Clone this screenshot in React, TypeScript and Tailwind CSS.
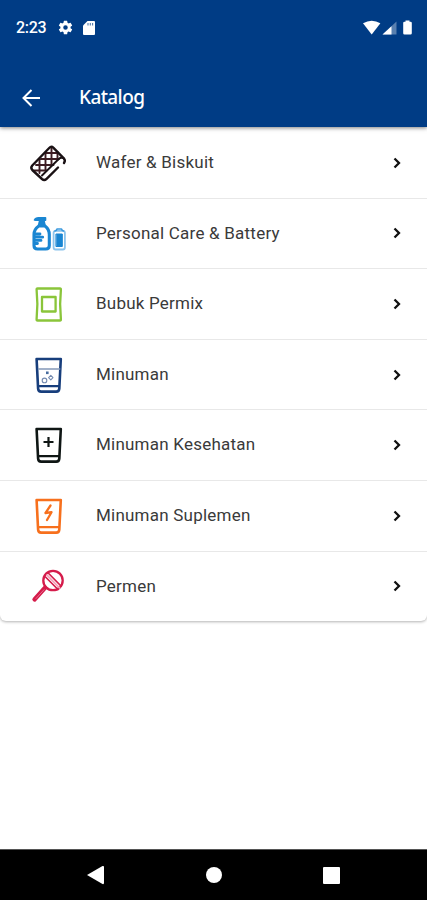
import type { ReactNode } from 'react'

interface Category {
  label: string
  icon: ReactNode
}

function Icon({ children, color }: { children: ReactNode; color: string }) {
  return (
    <svg viewBox="0 0 40 40" className="size-10" fill="none" stroke={color} strokeWidth="2.6" strokeLinecap="round" strokeLinejoin="round">
      {children}
    </svg>
  )
}

function Glass() {
  return (
    <>
      <path d="M8.6 4h24.2l-1.5 29.6q-.2 3-3 3H13.1q-2.8 0-3-3L8.6 4z" />
      <path d="M10.5 31.2h20.4" strokeWidth="2.2" />
    </>
  )
}

const CATEGORIES: Category[] = [
  {
    label: 'Wafer & Biskuit',
    icon: (
      <Icon color="#1a1114">
        <path d="M11.5 16.500V30M17.500 10v17.500M23.500 5v17M29.500 9v8M18 10h12M13 16h18M8 22h17.500M6 27.500h12.500" stroke="#3c1c22" strokeWidth="1.900" />
        <path d="M36 20q1.800-2.700-.2-4.700L25.500 4.800q-2.200-2-4.300.2L4.300 22.500q-2 2.300 0 4.500l9.700 9q2.300 2 4.600-.2L30 24.500" strokeWidth="2.400" />
        <path d="M35.500 15.200q-2.500-1.300-4.500.6L14 32.500" strokeWidth="1.900" />
      </Icon>
    ),
  },
  {
    label: 'Personal Care & Battery',
    icon: (
      <Icon color="#1a86d2">
        <path d="M6.500 7q1-2.200 4-2.200h7v2.400h-1.700l1.200 5h-6.400l1.200-5H8z" fill="#1a86d2" strokeWidth="1.6" />
        <path d="M10.8 13h6.200q4.300 3.300 4.300 8.500v11q0 3.500-3.500 3.500H9.500q-3.500 0-3.500-3.500v-11q0-5.200 4.800-8.500z" strokeWidth="3.1" />
        <path d="M6.500 21H12M6.500 24.200h8.200M6.500 27.400h6.500M6.500 30.500h3" strokeWidth="2.8" />
        <rect x="25.6" y="17.8" width="11.3" height="18.7" rx="2" stroke="#8cc4ec" strokeWidth="1.8" />
        <path d="M27 18q1.500-.3 2-2h4.500q.5 1.700 2 2" stroke="#3c9ade" strokeWidth="1.6" />
        <path d="M28.300 21h6v12.500h-6z" fill="#1a86d2" strokeWidth="1" />
      </Icon>
    ),
  },
  {
    label: 'Bubuk Permix',
    icon: (
      <Icon color="#8ac53a">
        <path d="M9.500 4.500h22.500q1 0 .9 1.200-1.600 14.800 0 29.600.1 1.200-.9 1.200H9.500q-1 0-.9-1.200 1.600-14.800 0-29.600-.1-1.200.9-1.200z" strokeWidth="2.3" />
        <rect x="14" y="13" width="13.6" height="14.5" strokeWidth="2.3" />
      </Icon>
    ),
  },
  {
    label: 'Minuman',
    icon: (
      <Icon color="#173e7c">
        <Glass />
        <path d="M10.5 14h21.300" stroke="#8498b8" strokeWidth="1.3" />
        <rect x="18" y="16.5" width="2.600" height="2.600" fill="#466b9e" stroke="none" />
        <g stroke="#758bb0" strokeWidth="1.1">
          <path d="m22.800 20.400 2.200 2.200-2.200 2.200-2.200-2.200z" />
          <circle cx="16.500" cy="25.400" r="2.300" />
        </g>
      </Icon>
    ),
  },
  {
    label: 'Minuman Kesehatan',
    icon: (
      <Icon color="#0f1614">
        <Glass />
        <path d="M20.500 12v10M15.500 17h10" strokeWidth="2.2" strokeLinecap="butt" />
      </Icon>
    ),
  },
  {
    label: 'Minuman Suplemen',
    icon: (
      <Icon color="#f7701d">
        <Glass />
        <path d="m22.500 9.500-5 7.500 6-.8L19 24" strokeWidth="2.3" />
      </Icon>
    ),
  },
  {
    label: 'Permen',
    icon: (
      <Icon color="#d51c4b">
        <circle cx="25" cy="14.500" r="9.700" strokeWidth="2.300" />
        <path d="m20.700 7.500 12.300 12.500M17.500 11l12.500 12.500" strokeWidth="1.700" />
        <path d="m19 9.200 12.500 12.600" stroke="#f3a5ba" strokeWidth="1.700" />
        <path d="M17 21.800 6.500 33.500" strokeWidth="4.300" />
        <path d="M16 23.700 8 32.500" stroke="#ec829f" strokeWidth=".8" />
      </Icon>
    ),
  },
]

function StatusBar() {
  return (
    <div className="flex h-[54px] items-center pl-4 pr-[14px] pt-px text-white">
      <span className="w-[41px] text-base font-medium tracking-[-0.3px]">2:23</span>
      <svg viewBox="0 0 24 24" className="size-[17px]" fill="currentColor">
        <path d="M19.140 12.940c.04-.3.060-.61.060-.94s-.02-.64-.07-.94l2.030-1.580a.5.5 0 0 0 .12-.61l-1.920-3.320a.49.490 0 0 0-.59-.22l-2.390.96a7 7 0 0 0-1.620-.94l-.36-2.540a.48.480 0 0 0-.48-.41h-3.840a.48.480 0 0 0-.47.410l-.36 2.540a7 7 0 0 0-1.620.94l-2.390-.96a.48.480 0 0 0-.59.220L2.740 8.870a.48.480 0 0 0 .12.610l2.030 1.580a7 7 0 0 0 0 1.880l-2.030 1.580a.49.490 0 0 0-.12.610l1.920 3.320c.12.220.37.290.59.220l2.390-.96c.5.380 1.030.7 1.620.94l.36 2.540c.05.240.24.410.48.410h3.840c.24 0 .44-.17.470-.41l.36-2.540a7 7 0 0 0 1.620-.94l2.390.96c.22.080.47 0 .59-.22l1.920-3.320a.48.480 0 0 0-.12-.61zM12 15.200a3.200 3.200 0 1 1 0-6.400 3.200 3.200 0 0 1 0 6.400z" />
      </svg>
      <svg viewBox="0 0 12 14" className="ml-[9px] h-[14px] w-3" fill="currentColor">
        <path d="M4.500 0H11q1 0 1 1v12q0 1-1 1H1q-1 0-1-1V4.500z" />
        <path d="M5 2v2.500M7.300 2v2.500M9.600 2v2.500" stroke="#527bab" strokeWidth="1.1" />
      </svg>
      <svg viewBox="0 0 50 16" className="ml-auto h-4 w-[50px]" fill="currentColor">
        <path d="M0 3.200Q8.700-1.800 17.400 3.200L8.700 14.500z" />
        <path d="M33.500 1.500v13H19.500z" opacity=".35" />
        <path d="M28.500 6.200v8.300h-9z" />
        <path d="M42.500.5h4v1.200h1q1.300 0 1.300 1.300v10.200q0 1.300-1.300 1.300h-6q-1.300 0-1.300-1.300V3q0-1.300 1.300-1.300h1z" />
      </svg>
    </div>
  )
}

function NavBar() {
  return (
    <nav className="flex h-[51px] items-center justify-between border-t border-[#555] bg-black px-[87px]">
      <svg viewBox="0 0 17 20" className="h-5 w-[17px]" fill="white">
        <path d="M0 10 15.500 1q1.500-.5 1.500 1v16q0 1.500-1.500 1z" />
      </svg>
      <span className="size-4 rounded-full bg-white" />
      <span className="size-[17px] rounded-[1px] bg-white" />
    </nav>
  )
}

export default function App() {
  return (
    <div className="flex h-[900px] w-full flex-col overflow-hidden bg-white font-['Roboto',sans-serif]">
      <header className="relative h-[127px] shrink-0 bg-[#003c85] shadow-[0_1px_4px_rgba(0,0,0,0.5)]">
        <StatusBar />
        <div className="flex h-[73px] items-center pl-[22px] pt-[13px] text-white">
          <svg viewBox="0 0 18 18" className="mt-px size-[18px]" fill="none" stroke="currentColor" strokeWidth="2">
            <path d="M18 9H2M9.500 1 1.500 9l8 8" />
          </svg>
          <h1 className="ml-[39px] font-['Noto_Sans',sans-serif] text-[19px] font-medium tracking-[-0.6px]">Katalog</h1>
        </div>
      </header>

      <main className="flex-1">
        <ul className="rounded-b-md pt-px shadow-[0_1px_3px_rgba(0,0,0,0.3)]">
          {CATEGORIES.map(({ label, icon }) => (
            <li key={label} className="flex h-[70.6px] items-center border-b border-[#e8e8e8] pl-7 pr-[25px] last:h-[69.6px] last:border-b-0">
              {icon}
              <span className="ml-7 text-[17px] tracking-[0.22px] text-[#3a3a3a]">{label}</span>
              <svg viewBox="0 0 10 12" className="ml-auto h-3 w-[10px]" fill="none" stroke="#111" strokeWidth="2.3">
                <path d="m2.500 1.500 4.500 4.500-4.500 4.500" />
              </svg>
            </li>
          ))}
        </ul>
      </main>

      <NavBar />
    </div>
  )
}
